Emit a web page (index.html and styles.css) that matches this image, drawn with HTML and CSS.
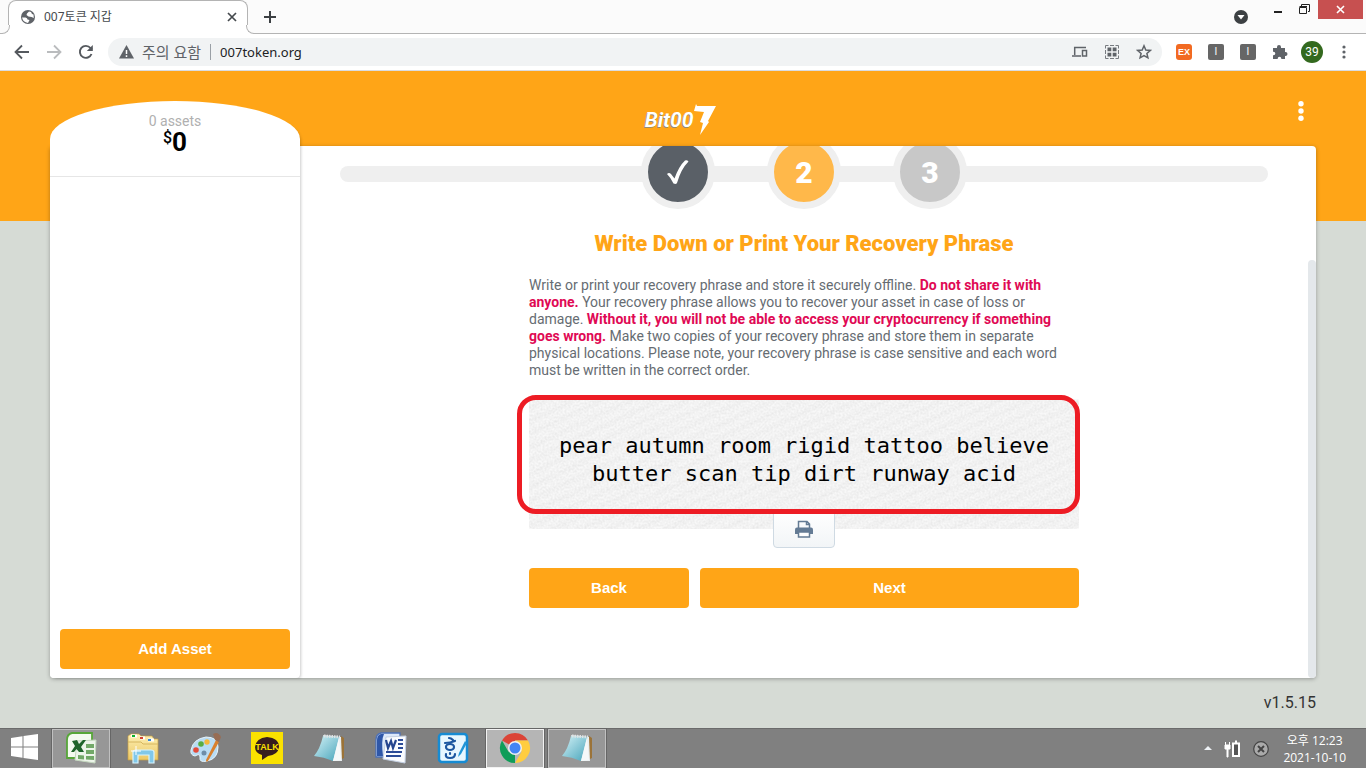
FILE: index.html
```html
<!DOCTYPE html>
<html lang="ko">
<head>
<meta charset="utf-8">
<title>007토큰 지갑</title>
<link rel="stylesheet" href="styles.css">
</head>
<body>
<div class="tabstrip">
  <div class="tab">
    <svg class="favicon" width="14" height="14" viewBox="0 0 14 14"><circle cx="7" cy="7" r="7" fill="#5f6368"/><path d="M1 7.500 4.500 7.500Q6.500 8 6.500 9.500L8.500 10 7 13Q2 12 1 7.500ZM8 1.500 6 3.500 5.500 5 7.500 6.500 10.500 7 12.800 8 12.500 4.500 11 4 10 2Z" fill="#fff"/></svg>
    <span class="tab-title">007토큰 지갑</span>
    <button class="plain" aria-label="Close tab"><svg width="10" height="10" viewBox="0 0 10 10"><path d="M1 1 9 9M9 1 1 9" stroke="#45494d" stroke-width="1.700"/></svg></button>
  </div>
  <button class="plain new-tab" aria-label="New tab"><svg width="12" height="12" viewBox="0 0 12 12"><path d="M6 0V12M0 6H12" stroke="#3c4043" stroke-width="2"/></svg></button>
  <div class="window-controls">
    <button class="plain search-tabs" aria-label="Search tabs"><svg width="14" height="14" viewBox="0 0 14 14"><circle cx="7" cy="7" r="7" fill="#3c4043"/><path d="M3.500 5H10.500L7 9.500Z" fill="#fff"/></svg></button>
    <button class="plain minimize" aria-label="Minimize"><svg width="8" height="12" viewBox="0 0 8 12"><path d="M0 7H8" stroke="#222" stroke-width="2"/></svg></button>
    <button class="plain restore" aria-label="Restore"><svg width="11" height="11" viewBox="0 0 11 11"><path d="M2.500 2V.500H10.500V7.500H9M.500 3.500H7.500V9.500H.500ZM.500 2.500H8" fill="none" stroke="#222"/></svg></button>
    <button class="plain close" aria-label="Close"><svg width="9" height="9" viewBox="0 0 9 9"><path d="M1 1 8 8M8 1 1 8" stroke="#fff" stroke-width="1.600"/></svg></button>
  </div>
</div>

<div class="toolbar">
  <button class="plain tool" aria-label="Back"><svg width="16" height="16" viewBox="0 0 16 16"><path d="M15 8H2M8 1.500 1.500 8 8 14.500" fill="none" stroke="#55595e" stroke-width="1.800"/></svg></button>
  <button class="plain tool" aria-label="Forward"><svg width="16" height="16" viewBox="0 0 16 16"><path d="M1 8H14M8 1.500 14.500 8 8 14.500" fill="none" stroke="#babcbe" stroke-width="1.800"/></svg></button>
  <button class="plain tool" aria-label="Reload"><svg width="16" height="16" viewBox="0 0 16 16"><path d="M13.500 10A6 6 0 1 1 12.500 4L14 5.500" fill="none" stroke="#55595e" stroke-width="1.900"/><path d="M14.800 1V7H8.800Z" fill="#55595e"/></svg></button>
  <div class="omnibox">
    <svg width="15" height="14" viewBox="0 0 15 14"><path d="M7.500 0 15 13.500H0Z" fill="#5f6368"/><path d="M7.500 5V9M7.500 10.200V12" stroke="#fff" stroke-width="1.500"/></svg>
    <span class="warning">주의 요함</span>
    <input class="url" aria-label="Address" value="007token.org">
    <button class="plain omni" aria-label="Send to device"><svg width="16" height="12" viewBox="0 0 16 12"><path d="M14 1.500H2.700V9M0 10H9M10.500 4.500H14.500V10H10.500Z" fill="none" stroke="#5f6368" stroke-width="1.500"/></svg></button>
    <button class="plain omni" aria-label="QR code"><svg width="14" height="14" viewBox="0 0 14 14"><path d="M.500 3.500V.500H3.500M10.500.500H13.500V3.500M13.500 10.500V13.500H10.500M3.500 13.500H.500V10.500M5 .500H9M5 13.500H9M.500 5V9M13.500 5V9" fill="none" stroke="#777b80"/><path d="M2.500 2.500H6.300V6.300H2.500ZM7.700 2.500H11.500V6.300H7.700ZM2.500 7.700H6.300V11.500H2.500ZM7.700 7.700H11.500V11.500H7.700Z" fill="#5f6368"/></svg></button>
    <button class="plain omni" aria-label="Bookmark"><svg width="16" height="16" viewBox="0 0 16 16"><path d="M8 1.800 9.800 6 14.300 6.400 10.900 9.400 11.900 13.800 8 11.500 4.100 13.800 5.100 9.400 1.700 6.400 6.200 6Z" fill="none" stroke="#5f6368" stroke-width="1.500"/></svg></button>
  </div>
  <button class="plain tool"><span class="ext ext-orange">EX</span></button>
  <button class="plain tool"><span class="ext">I</span></button>
  <button class="plain tool"><span class="ext">I</span></button>
  <button class="plain tool" aria-label="Extensions"><svg width="16" height="16" viewBox="0 0 16 16"><path d="M1 4H5V3A2 2 0 0 1 9 3V4H13V8H13.500A1.900 1.900 0 0 1 13.500 12H13V15H9.300V14.500A1.800 1.800 0 0 0 5.700 14.500V15H1V11.300H1.500A1.800 1.800 0 0 0 1.500 7.700H1Z" fill="#5f6368"/></svg></button>
  <button class="plain tool"><span class="avatar">39</span></button>
  <button class="plain tool" aria-label="Browser menu"><svg width="4" height="14" viewBox="0 0 4 14"><g fill="#5f6368"><circle cx="2" cy="2" r="1.600"/><circle cx="2" cy="7" r="1.600"/><circle cx="2" cy="12" r="1.600"/></g></svg></button>
</div>

<div class="wallet">
  <header class="wallet-header">
    <div class="logo"><span>Bit00</span><svg width="24" height="32" viewBox="0 0 24 32"><path d="M3 0 4 2H23L15 17 16 18 7 31 10 19 7 18 11 8 1 7Z" fill="#fff"/></svg></div>
    <button class="plain wallet-menu" aria-label="Menu"><svg width="6" height="20" viewBox="0 0 6 20"><g fill="#fff"><circle cx="3" cy="2.700" r="2.700"/><circle cx="3" cy="10" r="2.700"/><circle cx="3" cy="17.300" r="2.700"/></g></svg></button>
  </header>

  <div class="card">
    <aside class="sidebar">
      <div class="balance">
        <div class="asset-count">0 assets</div>
        <div class="total"><span class="currency">$</span>0</div>
      </div>
      <button class="primary add-asset">Add Asset</button>
    </aside>

    <main class="content">
      <ol class="steps">
        <li class="step done"><svg width="24" height="26" viewBox="0 0 24 26" aria-label="Done"><path d="M1 15Q3 13 5 15L8.500 19.500Q13 7 19 1.500 21 .500 22.500 2.500 15 10 11 24 10 25.500 7.500 24.500 5 19 1 15Z" fill="#fff"/></svg></li>
        <li class="step current">2</li>
        <li class="step">3</li>
      </ol>
      <div class="phrase-page">
        <h1>Write Down or Print Your Recovery Phrase</h1>
        <p>Write or print your recovery phrase and store it securely offline. <strong>Do not share it with anyone.</strong> Your recovery phrase allows you to recover your asset in case of loss or damage. <strong>Without it, you will not be able to access your cryptocurrency if something goes wrong.</strong> Make two copies of your recovery phrase and store them in separate physical locations. Please note, your recovery phrase is case sensitive and each word must be written in the correct order.</p>
        <div class="phrase">
          <svg class="paper" width="100%" height="100%"><filter id="grain" x="0" y="0" width="100%" height="100%"><feTurbulence type="fractalNoise" baseFrequency=".5" numOctaves="2" seed="4"/><feColorMatrix values="0 0 0 0 0  0 0 0 0 0  0 0 0 0 0  0 .1 0 0 -.03"/></filter><rect width="100%" height="100%" filter="url(#grain)"/></svg>
          <div class="words">pear autumn room rigid tattoo believe butter scan tip dirt runway acid</div>
          <button class="print" aria-label="Print"><svg width="20" height="20" viewBox="0 0 20 20"><path d="M4.500 9V2.500H13L15.500 5V9M12.500 2.500V5.500H15.500" fill="none" stroke="#647b94" stroke-width="1.500"/><path d="M3 8.500H17Q19 8.500 19 10.500V15H1V10.500Q1 8.500 3 8.500Z" fill="#647b94"/><path d="M4.500 13H15.500V18H4.500Z" fill="#fff" stroke="#647b94" stroke-width="1.500"/></svg></button>
          <div class="highlight"></div>
        </div>
        <div class="actions">
          <button class="primary">Back</button>
          <button class="primary">Next</button>
        </div>
      </div>
      <div class="scroll-thumb"></div>
    </main>
  </div>
  <footer class="version">v1.5.15</footer>
</div>

<svg class="defs" width="0" height="0">
  <defs>
    <linearGradient id="pad" x1="0" x2="1" y1="0" y2="1"><stop offset="0" stop-color="#d4f2f7"/><stop offset="1" stop-color="#49a5bb"/></linearGradient>
    <linearGradient id="manila" x1="0" x2="0" y1="0" y2="1"><stop offset="0" stop-color="#fdf0b4"/><stop offset="1" stop-color="#ecc864"/></linearGradient>
    <symbol id="notepad" viewBox="0 0 32 32"><path d="M28 4 31 6V26L27 28Z" fill="#9b7338"/><path d="M10 3 28 5 29 29 20 29Z" fill="#e9eef0"/><path d="M10 4 26 5 20 29Q11 25 1 24 7 17 10 4Z" fill="url(#pad)"/><path d="M26 6 28 28 20 29Z" fill="#f5f8f9"/><path d="M11 4 27 5" stroke="#dfe3e4" stroke-width="3" stroke-dasharray="1.500 1"/></symbol>
  </defs>
</svg>
<nav class="taskbar">
  <button class="start" aria-label="Start"><svg width="28" height="26" viewBox="0 0 28 26"><path d="M0 4 11.500 2.200V12.500H0ZM12.500 2 27 0V12.500H12.500ZM0 13.500H11.500V23.800L0 22ZM12.500 13.500H27V26L12.500 24Z" fill="#fff"/></svg></button>
  <button class="task open" aria-label="Excel"><svg width="32" height="32" viewBox="0 0 32 32"><path d="M7 1H27V26H2V8Q2 2 7 1Z" fill="#f4faf0" stroke="#57a639" stroke-width="1.800"/><path d="M12 9 31 8 30 31 10 28Z" fill="#edf5ea" stroke="#c5d8c0"/><path d="M21 12H29V16H21ZM21 18H29V22H21ZM13 23 19 23.500V27.500L13 27ZM21 24H29V28L21 27.500Z" fill="#72a968"/><path d="M7 9 12 8 14 12 18 8H21L16 15 19 20H14L11.500 17 9 20H6L10 14Z" fill="#1f642a"/></svg></button>
  <button class="task" aria-label="File Explorer"><svg width="32" height="32" viewBox="0 0 32 32"><path d="M1 4 4 2H12L14 4H25L27 7H31V28H1Z" fill="url(#manila)" stroke="#c79f43" stroke-width=".700"/><path d="M4 4H10M13 6H18M21 8H27" stroke="#fff" stroke-width="3"/><path d="M5 4H8" stroke="#0ab12c" stroke-width="2"/><path d="M13 6H16" stroke="#d34332" stroke-width="2"/><path d="M21 8H24" stroke="#3689db" stroke-width="2"/><path d="M1 10 14 10 16 12H31" fill="none" stroke="#d6b65e"/><path d="M6 31V20Q6 18 9 18H24Q27 18 27 20V31H22V23H11V31Z" fill="#81c8e9" stroke="#d8f3fd" stroke-width="1.200"/><path d="M9 14V23M4 19H14" stroke="#fff"/></svg></button>
  <button class="task" aria-label="Paint"><svg width="32" height="32" viewBox="0 0 32 32"><path d="M2 18Q4 7 17 5 29 5 29 15 29 27 18 29 10 31 11 25 11 21 6 24 1 23 2 18Z" fill="#b8dcf4" stroke="#e7f4fb"/><circle cx="15" cy="21" r="2.500" fill="#6d8da9"/><circle cx="7" cy="18" r="2.800" fill="#e34b3a"/><circle cx="12" cy="12" r="2.800" fill="#58ad42"/><circle cx="18" cy="10" r="2.700" fill="#f4b83d"/><path d="M27 8 30 10 19 29Q17 31 17 28Z" fill="#d9812f"/><path d="M24 2Q29-1 32 5L30 10 26 8Z" fill="#976d54"/></svg></button>
  <button class="task"><span class="talk"><svg width="32" height="32" viewBox="0 0 32 32"><path d="M16 5Q28 6 28 15 27 23 17 24L11 28V23Q4 21 4 15 5 6 16 5Z" fill="#371d1e"/><text x="16" y="18" text-anchor="middle" class="talk-label">TALK</text></svg></span></button>
  <button class="task" aria-label="Notepad"><svg width="32" height="32"><use href="#notepad"/></svg></button>
  <button class="task" aria-label="Word"><svg width="32" height="32" viewBox="0 0 32 32"><path d="M6 1H25V25H1V8Q1 2 6 1Z" fill="#dce8fa" stroke="#4b70b8" stroke-width="1.300"/><path d="M6 2 9 2Q6 8 8 24H2V8Q2 3 6 2Z" fill="#2f57a8"/><path d="M11 5 31 4 30 31 8 27Z" fill="#fafcff" stroke="#c4d0e3"/><path d="M23 8H28M23 12H28M23 16H28M11 20H27M11 24H26" stroke="#2b4b97" stroke-width="2"/><path d="M11 8 13 16 16 9 18 16 21 8" fill="none" stroke="#25458f" stroke-width="2.200"/></svg></button>
  <button class="task" aria-label="Hancom Office"><svg width="32" height="32" viewBox="0 0 32 32"><rect x="2" y="2" width="28" height="28" rx="3" fill="#e7f7ff" stroke="#168bd3" stroke-width="2.500"/><g fill="none" stroke="#1c57a0" stroke-width="2.200" stroke-linecap="round"><path d="M12 6Q14 6 16 8M8 11Q13 11 18 9"/><ellipse cx="13" cy="15" rx="4" ry="3"/><path d="M9 22Q8 26 13 26 18 26 18 22M13 21V22"/></g><path d="M28 9 22 21 21 25 24 22 30 11Z" fill="#2095d7"/></svg></button>
  <button class="task open active" aria-label="Chrome"><svg width="32" height="32" viewBox="0 0 32 32"><path d="M16 16 3 8.500A15 15 0 0 1 29 8.500H16Z" fill="#db4437"/><path d="M16 16 16 31A15 15 0 0 1 3 8.500L9.500 19.750Z" fill="#0f9d58"/><path d="M16 8.500H29A15 15 0 0 1 16 31L22.500 19.750Z" fill="#ffcd40"/><circle cx="16" cy="16" r="7" fill="#f1f1f1"/><circle cx="16" cy="16" r="5.500" fill="#4285f4"/></svg></button>
  <button class="task open" aria-label="Notepad window"><svg width="32" height="32"><use href="#notepad"/></svg></button>
  <div class="tray">
    <svg width="8" height="5" viewBox="0 0 8 5"><path d="M4 0 8 4H0Z" fill="#eef2f6"/></svg>
    <svg width="17" height="18" viewBox="0 0 17 18"><path d="M1 5H6V9H4V17H3V9H1ZM1.500 2V5M5.500 2V5" fill="#fff" stroke="#fff"/><path d="M9 3.500H15V16H9ZM11 1.500H13" fill="#555" stroke="#fff" stroke-width="2"/></svg>
    <svg width="16" height="16" viewBox="0 0 16 16"><circle cx="8" cy="8" r="7.300" fill="#aaa" stroke="#444" stroke-width="1.200"/><path d="M5 5 11 11M11 5 5 11" stroke="#444" stroke-width="2"/></svg>
    <div class="clock"><span>오후 12:23</span><span>2021-10-10</span></div>
  </div>
</nav>
</body>
</html>
```
FILE: styles.css
```css
* { box-sizing: border-box; }
body {
  margin: 0;
  height: 100vh;
  display: flex;
  flex-direction: column;
  overflow: hidden;
  font-family: Roboto, "Noto Sans CJK KR", sans-serif;
}
button { font: inherit; cursor: pointer; }
svg { display: block; flex: none; }
.defs { position: absolute; }
.plain {
  display: flex;
  align-items: center;
  justify-content: center;
  padding: 0;
  border: 0;
  background: none;
}

/* Browser tab strip */
.tabstrip {
  flex: none;
  display: flex;
  height: 34px;
  padding: 0 3px 0 8px;
  background: #fbfbfb;
  border-bottom: 1px solid #b4b4b4;
}
.tab {
  position: relative;
  display: flex;
  align-items: center;
  gap: 9px;
  width: 240px;
  height: 34px;
  padding: 0 10px 2px 12px;
  background: #fff;
  border: 1px solid #b4b4b4;
  border-bottom: 0;
  border-radius: 8px 8px 0 0;
}
.tab::before,
.tab::after {
  content: "";
  position: absolute;
  bottom: 0;
  width: 8px;
  height: 8px;
  background: #fbfbfb;
  border: 0 solid #b4b4b4;
  border-bottom-width: 1px;
}
.tab::before {
  left: -8px;
  border-right-width: 1px;
  border-bottom-right-radius: 8px;
  box-shadow: 2px 2px 0 #fff;
}
.tab::after {
  right: -8px;
  border-left-width: 1px;
  border-bottom-left-radius: 8px;
  box-shadow: -2px 2px 0 #fff;
}
.tab-title {
  flex: 1;
  font: 12px/16px "Noto Sans", "Noto Sans CJK KR", sans-serif;
  color: #45494d;
}
.new-tab { width: 44px; }
.window-controls {
  display: flex;
  align-items: flex-start;
  margin-left: auto;
}
.search-tabs { height: 34px; width: 34px; }
.minimize { height: 22px; width: 40px; }
.restore { height: 18px; width: 12px; margin-right: 8px; }
.close { height: 19px; width: 45px; background: #c75050; }

/* Browser toolbar */
.toolbar {
  flex: none;
  display: flex;
  align-items: center;
  height: 37px;
  padding: 0 6px;
  background: #fff;
  border-bottom: 1px solid #dadce0;
}
.tool { width: 32px; height: 32px; }
.omnibox {
  flex: 1;
  display: flex;
  align-items: center;
  height: 28px;
  margin: 0 6px;
  padding: 0 2px 0 11px;
  border-radius: 14px;
  background: #f1f3f4;
  font: 15px/20px "Noto Sans", "Noto Sans CJK KR", sans-serif;
}
.warning {
  margin-left: 8px;
  padding-right: 9px;
  line-height: 16px;
  color: #5f6368;
  border-right: 1px solid #9aa0a6;
}
.url {
  flex: 1;
  min-width: 0;
  padding: 0 9px;
  border: 0;
  background: none;
  font: 13px/20px "Noto Sans", sans-serif;
  color: #202124;
}
.omni { width: 32px; height: 28px; }
.ext {
  width: 16px;
  height: 16px;
  border-radius: 2px;
  background: #666;
  color: #fff;
  font: 10px/16px "Liberation Sans", sans-serif;
}
.ext-orange {
  border-radius: 3px;
  background: #f26a21;
  font-size: 9px;
  font-weight: bold;
}
.avatar {
  width: 22px;
  height: 22px;
  border-radius: 50%;
  background: #33691e;
  color: #fff;
  font-size: 12px;
  line-height: 22px;
}

/* Wallet page */
.wallet {
  flex: 1;
  min-height: 0;
  display: flex;
  flex-direction: column;
  padding: 0 50px;
  background: linear-gradient(#ffa517 150px, #d6dbd5 150px);
}
.wallet-header {
  flex: none;
  display: grid;
  grid-template-columns: 1fr auto 1fr;
  height: 75px;
}
.logo {
  grid-column: 2;
  display: flex;
  align-items: center;
  padding: 20px 4px 2px 0;
  font-size: 21px;
  font-style: italic;
  font-weight: 700;
  line-height: 32px;
  color: #fff;
  text-shadow: -1px 1px 0 #9b8b6b;
}
.wallet-menu {
  justify-self: end;
  width: 30px;
  height: 80px;
}
.card {
  flex: 1;
  min-height: 0;
  display: flex;
  background: #fff;
  border-radius: 4px;
  box-shadow: 0 1px 4px rgba(0, 0, 0, .3);
}
.sidebar {
  flex: none;
  display: flex;
  flex-direction: column;
  width: 250px;
  margin-top: -45px;
  padding-bottom: 9px;
  background: #fff;
  border-radius: 125px 125px 4px 4px / 38px 38px 4px 4px;
  box-shadow: 3px 2px 3px -2px rgba(0, 0, 0, .2);
}
.balance {
  height: 76px;
  padding-top: 12px;
  border-bottom: 1px solid #e6e6e6;
  text-align: center;
}
.asset-count { font-size: 14px; line-height: 16px; color: #b0b0b0; }
.total {
  display: flex;
  justify-content: center;
  font-size: 26px;
  font-weight: 700;
  line-height: 26px;
  color: #000;
}
.currency { font-size: 16px; font-weight: 500; line-height: 18px; }
.primary {
  height: 40px;
  border: 0;
  border-radius: 4px;
  background: #ffa517;
  color: #fff;
  font: bold 15px/20px "Liberation Sans", sans-serif;
}
.add-asset { margin: auto 10px 0; }
.content {
  flex: 1;
  position: relative;
  overflow: hidden;
  padding: 0 48px 0 40px;
}
.steps {
  position: relative;
  display: flex;
  justify-content: center;
  gap: 52px;
  margin: -11px 0 0;
  padding: 0;
  list-style: none;
}
.steps::before {
  content: "";
  position: absolute;
  inset: 31px 0 auto;
  height: 16px;
  border-radius: 8px;
  background: #efefef;
}
.step {
  position: relative;
  display: flex;
  align-items: center;
  justify-content: center;
  width: 74px;
  height: 74px;
  border: 7px solid #efefef;
  border-radius: 50%;
  background: #c8c8c8;
  color: #fff;
  font-size: 30px;
  font-weight: 900;
}
.done { background: #5a6067; }
.current { background: #ffb84a; }
.phrase-page { max-width: 550px; margin: 0 auto; }
h1 {
  margin: 21px 0 19px;
  font-size: 22px;
  font-weight: 900;
  line-height: 28px;
  text-align: center;
  color: #ffa517;
}
p {
  margin: 0 0 20px;
  padding-right: 20px;
  font-size: 14px;
  line-height: 17px;
  color: #666c72;
}
strong { font-weight: 700; color: #e00954; }
.phrase {
  position: relative;
  padding: 33px 24px 41px;
  border-radius: 4px;
  background: repeating-linear-gradient(155deg, #f8f8f8 0 4px, #f4f4f4 8px, #f8f8f8 12px);
}
.paper { position: absolute; inset: 0; }
.words {
  position: relative;
  font: 22px/28px "DejaVu Sans Mono", monospace;
  text-align: center;
  color: #000;
}
.print {
  position: absolute;
  left: 50%;
  bottom: -19px;
  display: flex;
  align-items: center;
  justify-content: center;
  width: 62px;
  height: 38px;
  margin-left: -31px;
  padding: 0;
  border: 1px solid #cfdae3;
  border-radius: 4px;
  background: linear-gradient(#fff, #f2f5f7);
}
.highlight {
  position: absolute;
  inset: -4px -1px 15px -12px;
  border: 5px solid #ed1c24;
  border-radius: 19px;
  pointer-events: none;
}
.actions {
  display: grid;
  grid-template-columns: 160px 1fr;
  gap: 11px;
  margin-top: 39px;
}
.scroll-thumb {
  position: absolute;
  top: 114px;
  right: 0;
  bottom: 0;
  width: 8px;
  border-radius: 4px;
  background: #e4e8eb;
}
.version {
  flex: none;
  height: 50px;
  font-size: 16px;
  line-height: 50px;
  text-align: right;
  color: #333;
}

/* Taskbar */
.taskbar {
  flex: none;
  display: flex;
  gap: 4px;
  height: 40px;
  padding-right: 20px;
  border-top: 1px solid #6b6b6b;
  background: #808080;
}
.start,
.task {
  display: flex;
  align-items: center;
  justify-content: center;
  padding: 0;
  border: 1px solid transparent;
  background: none;
}
.start { width: 48px; padding: 0 0 3px 2px; }
.task { width: 58px; padding-bottom: 2px; }
.open { border-color: #c0c0c0; background: #979797; outline: 1px solid #666; }
.active { border-color: #f2f2f2; background: #b5b5b5; }
.talk { background: #fae100; }
.talk-label { font: bold 9px "Liberation Sans", sans-serif; fill: #fae100; }
.tray {
  display: flex;
  align-items: center;
  gap: 12px;
  margin-left: auto;
}
.clock {
  display: flex;
  flex-direction: column;
  align-items: center;
  margin-left: 2px;
  font: 12px/17px "Open Sans", "Noto Sans CJK KR", sans-serif;
  color: #fff;
}
```
